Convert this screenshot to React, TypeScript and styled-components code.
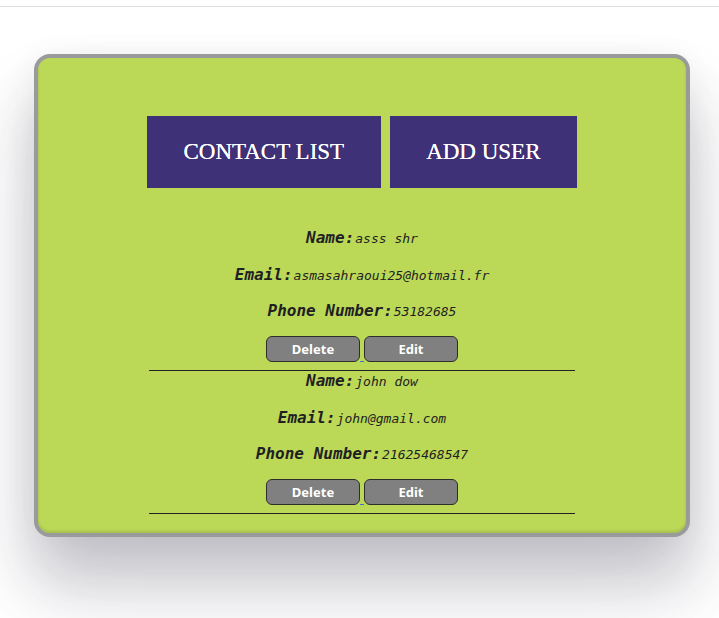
import React from "react";
import styled, { createGlobalStyle } from "styled-components";

const Global = createGlobalStyle`
  html, body { margin: 0; padding: 0; background: #ffffff; }
  body { font-family: "Liberation Serif", serif; }
`;

const Page = styled.div`
  min-height: 100vh;
  padding-bottom: 90px;
  box-sizing: border-box;
  overflow: hidden;
`;

const TopRule = styled.div`
  height: 6px;
  border-bottom: 1px solid #dedede;
`;

const Card = styled.div`
  box-sizing: border-box;
  width: 656px;
  margin: 47px 0 0 34px;
  border: 4px solid #999a9c;
  border-radius: 16px;
  background: #bbd957;
  padding: 58px 0 19px;
  box-shadow: 0 40px 60px rgba(30, 30, 55, 0.22), 0 60px 90px rgba(30, 30, 55, 0.08),
    0 0 30px rgba(0, 0, 0, 0.04), inset 0 -2px 3px rgba(0, 0, 0, 0.12);
`;

const Nav = styled.nav`
  display: flex;
  justify-content: center;
  gap: 9px;
`;

const NavButton = styled.button`
  height: 72px;
  padding: 0 36.5px;
  border: none;
  background: #3f3177;
  color: #ffffff;
  font-family: "Liberation Serif", "Times New Roman", serif;
  font-size: 23px;
  text-transform: uppercase;
  text-shadow: 0 0 0.4px #ffffff;
  cursor: pointer;
`;

const List = styled.div`
  margin-top: 40px;
  display: flex;
  flex-direction: column;
`;

const Contact = styled.section`
  display: flex;
  flex-direction: column;
  align-items: center;
`;

const Field = styled.div<{ $gap?: number }>`
  display: flex;
  justify-content: center;
  align-items: baseline;
  height: 20px;
  line-height: 20px;
  margin-bottom: ${(p) => p.$gap ?? 16.5}px;
  font-family: "DejaVu Sans Mono", "Liberation Mono", monospace;
  font-style: italic;
  color: #222222;
`;

const Label = styled.span`
  font-weight: 700;
  font-size: 16px;
  color: #1f1f24;
`;

const Value = styled.span`
  font-size: 13px;
  margin-left: 1px;
`;

const Actions = styled.div`
  display: flex;
  align-items: flex-end;
  height: 26px;
`;

const ActionButton = styled.button`
  box-sizing: border-box;
  width: 94px;
  height: 26px;
  padding: 0;
  border: 1px solid #2e2e2e;
  border-radius: 6px;
  background: #808080;
  color: #ffffff;
  font-family: "Noto Sans", "Liberation Sans", sans-serif;
  font-weight: 700;
  font-size: 13px;
  cursor: pointer;
`;

const LinkGap = styled.span`
  width: 4px;
  height: 7px;
  border-bottom: 1px solid #3b6fd8;
`;

const Rule = styled.hr`
  width: 426px;
  margin: 8px auto 0;
  border: none;
  border-top: 1px solid #222222;
  height: 0;
`;

type ContactData = { name: string; email: string; phone: string };

const contacts: ContactData[] = [
  { name: "asss shr", email: "asmasahraoui25@hotmail.fr", phone: "53182685" },
  { name: "john dow", email: "john@gmail.com", phone: "21625468547" },
];

export default function App() {
  return (
    <Page>
      <Global />
      <TopRule />
      <Card>
        <Nav>
          <NavButton>Contact List</NavButton>
          <NavButton>Add User</NavButton>
        </Nav>
        <List>
          {contacts.map((c) => (
            <Contact key={c.email}>
              <Field>
                <Label>Name:</Label>
                <Value>{c.name}</Value>
              </Field>
              <Field>
                <Label>Email:</Label>
                <Value>{c.email}</Value>
              </Field>
              <Field $gap={15}>
                <Label>Phone Number:</Label>
                <Value>{c.phone}</Value>
              </Field>
              <Actions>
                <ActionButton>Delete</ActionButton>
                <LinkGap />
                <ActionButton>Edit</ActionButton>
              </Actions>
              <Rule />
            </Contact>
          ))}
        </List>
      </Card>
    </Page>
  );
}
